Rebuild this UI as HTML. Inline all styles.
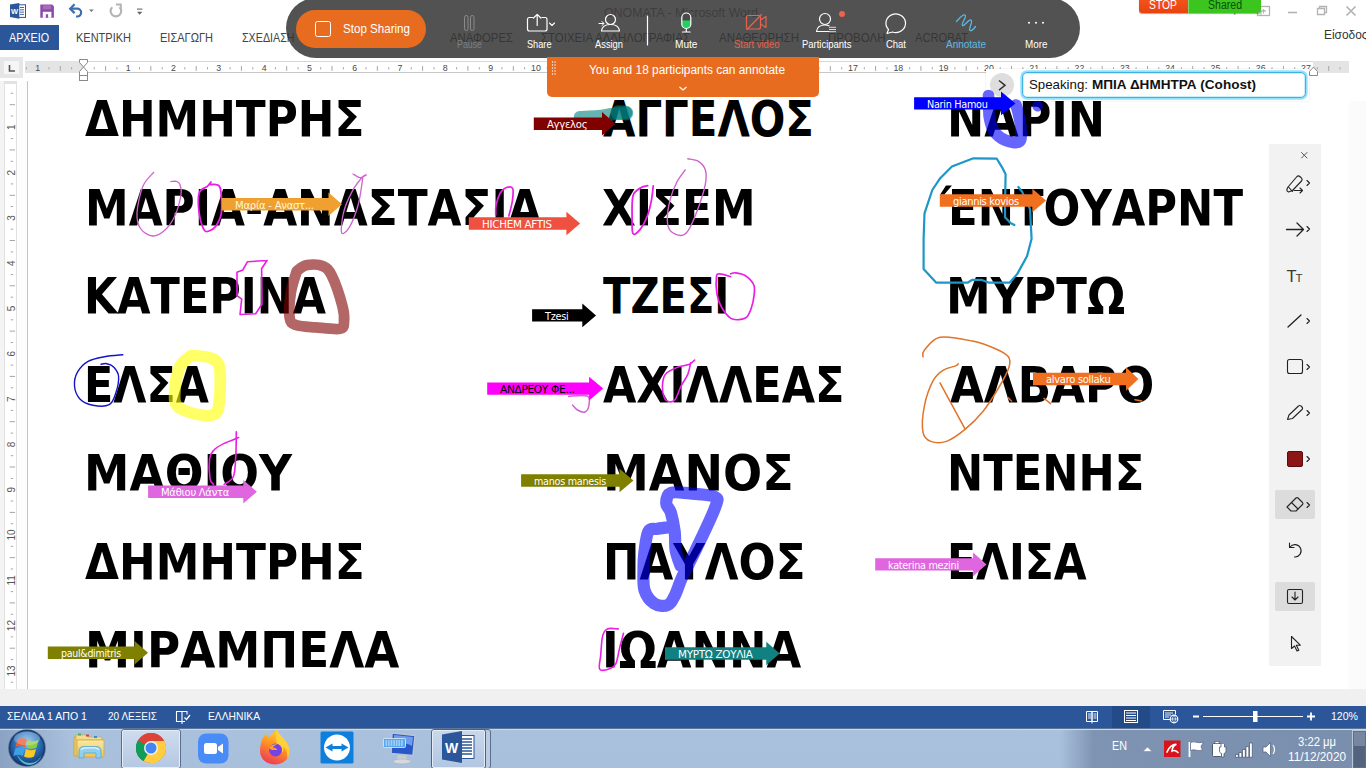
<!DOCTYPE html>
<html lang="el">
<head>
<meta charset="utf-8">
<title>ΟΝΟΜΑΤΑ - Microsoft Word</title>
<style>
*{box-sizing:border-box;margin:0;padding:0}
html,body{width:1366px;height:768px;overflow:hidden;background:#fff;font-family:"Liberation Sans",sans-serif;}
.abs{position:absolute}
#root{position:relative;width:1366px;height:768px;overflow:hidden;background:#fff}
.tab{position:absolute;top:26px;height:24px;line-height:24px;font-size:12.2px;color:#444;white-space:nowrap;transform-origin:0 50%}
.big{position:absolute;font-family:"DejaVu Sans Condensed","DejaVu Sans","Liberation Sans",sans-serif;font-stretch:condensed;font-weight:bold;font-size:49.24px;line-height:60px;height:60px;color:#000;white-space:nowrap;transform-origin:0 0;letter-spacing:0}
.zl{position:absolute;top:38px;height:12px;line-height:12px;font-size:11px;color:#fff;white-space:nowrap;text-align:center;transform:translateX(-50%)}
.st{position:absolute;top:706px;height:22px;line-height:21px;font-size:11px;color:#fff;white-space:nowrap}
.al{position:absolute;height:13px;line-height:13px;font-size:10.5px;color:#fff;white-space:nowrap;text-align:center;font-family:"DejaVu Sans","Liberation Sans",sans-serif;letter-spacing:-0.3px}
</style>
</head>
<body>
<div id="root">
<!-- ===== Word title bar / quick access ===== -->
<svg class="abs" style="left:0;top:0" width="300" height="25" viewBox="0 0 300 25">
  <!-- word icon -->
  <rect x="17" y="4.800" width="8.500" height="12.600" fill="#fff" stroke="#2b579a" stroke-width="1"/>
  <path d="M20 7.500h4M20 9.800h4M20 12.100h4M20 14.400h4" stroke="#2b579a" stroke-width=".9"/>
  <path d="M10 4.600 L19.300 2.900 V18.800 L10 17.100 Z" fill="#2b579a"/>
  <text x="14.600" y="13.800" font-size="7.500" font-weight="bold" fill="#fff" text-anchor="middle" font-family="Liberation Sans, sans-serif">W</text>
  <!-- save -->
  <path d="M40.300 4.500h11.800l1.800 1.800v11.500h-13.600z" fill="#8d4ba8"/>
  <rect x="42.800" y="5.300" width="8.400" height="4" fill="#a66cbd"/>
  <rect x="42.800" y="11.800" width="8.600" height="6" fill="#fff"/>
  <rect x="45.800" y="14.300" width="2.300" height="3.500" fill="#8d4ba8"/>
  <!-- undo -->
  <path d="M70.500 8.700 H77.200 a3.900 3.900 0 0 1 0 7.800 H76" fill="none" stroke="#3a6db5" stroke-width="2.200"/>
  <path d="M74.600 4.300 L70.200 8.700 L74.600 13.100" fill="none" stroke="#3a6db5" stroke-width="2.200"/>
  <path d="M89 9.400 h4.800 l-2.400 2.600z" fill="#777"/>
  <!-- redo -->
  <path d="M112.300 7.200 a5.300 5.300 0 1 0 7.200 0" fill="none" stroke="#b4b4b4" stroke-width="2.100"/>
  <path d="M116 4.600 h4.800 v4.600" fill="none" stroke="#b4b4b4" stroke-width="2"/>
  <!-- customize -->
  <path d="M137 9.100h5.400" stroke="#666" stroke-width="1.100"/>
  <path d="M137 11.700 h5.400 l-2.700 3z" fill="#666"/>
</svg>
<!-- window controls -->
<svg class="abs" style="left:1220px;top:0" width="146" height="25" viewBox="0 0 146 25">
  <g fill="none" stroke="#b3b3b3" stroke-width="1.300">
    <rect x="37.500" y="6.500" width="12" height="9"/>
    <path d="M41 15 v-4 h5 M43.500 13.500 v-4 m-2 2 l2-2 l2 2" stroke-width="1"/>
    <path d="M68 12.500h9" stroke-width="1.600"/>
    <path d="M97.500 8.500h7v6h-7z M99.500 8.500v-2h7v6h-2"/>
    <path d="M126.500 6.500l9 9m0-9l-9 9" stroke-width="1.700"/>
  </g>
  <rect x="14" y="13" width="1.500" height="2" fill="#b3b3b3"/>
</svg>

<!-- ribbon tabs -->
<div class="abs" style="left:0;top:25px;width:59px;height:25px;background:#2b579a"></div>
<div class="tab" style="left:8.5px;color:#fff;transform-origin:0 50%;transform:scaleX(0.8812)">ΑΡΧΕΙΟ</div>
<div class="tab" style="left:76px;transform-origin:0 50%;transform:scaleX(0.9023)">ΚΕΝΤΡΙΚΗ</div>
<div class="tab" style="left:160px;transform-origin:0 50%;transform:scaleX(0.9057)">ΕΙΣΑΓΩΓΗ</div>
<div class="tab" style="left:241.5px;transform-origin:0 50%;transform:scaleX(0.8780)">ΣΧΕΔΙΑΣΗ</div>
<div class="tab" style="left:449.5px;transform-origin:0 50%;transform:scaleX(0.9303)">ΑΝΑΦΟΡΕΣ</div>
<div class="tab" style="left:540.5px;transform-origin:0 50%;transform:scaleX(0.9401)">ΣΤΟΙΧΕΙΑ ΑΛΛΗΛΟΓΡΑΦΙΑΣ</div>
<div class="tab" style="left:719px;transform-origin:0 50%;transform:scaleX(0.9434)">ΑΝΑΘΕΩΡΗΣΗ</div>
<div class="tab" style="left:828px;transform-origin:0 50%;transform:scaleX(0.9465)">ΠΡΟΒΟΛΗ</div>
<div class="tab" style="left:915px;transform-origin:0 50%;transform:scaleX(0.9135)">ACROBAT</div>
<div class="tab" style="left:1323.500px;top:23px;font-size:12.500px;color:#333;transform-origin:0 50%;transform:scaleX(0.9515)">Είσοδος</div>
<div class="abs" style="left:604px;top:3.500px;height:18px;line-height:18px;font-size:13px;color:#777;white-space:nowrap;transform-origin:0 50%;transform:scaleX(0.9518)">ΟΝΟΜΑΤΑ - Microsoft Word</div>

<!-- ===== ruler ===== -->
<div class="abs" style="left:0;top:57px;width:23px;height:21px;background:#e6e6e6"></div>
<div class="abs" style="left:4px;top:61px;width:15px;height:13px;background:#f6f6f6"></div>
<svg class="abs" style="left:0;top:57px" width="23" height="21"><path d="M9.500 8v6h5.500" fill="none" stroke="#555" stroke-width="1.600"/></svg>
<div class="abs" style="left:25px;top:61px;width:1324px;height:12px;background:#e4e4e4"></div>
<div class="abs" style="left:83px;top:61px;width:1230px;height:12px;background:#fff;border-top:1px solid #d8d8d8;border-bottom:1px solid #c8c8c8"></div>
<svg class="abs" style="left:0;top:0" width="1366" height="90" font-family="Liberation Sans, sans-serif" font-size="8.800" fill="#4a4a4a">
<text x="37.6" y="70.800" text-anchor="middle">1</text>
<rect x="48.4" y="67.200" width="1" height="2.200" fill="#a6a6a6"/>
<rect x="59.8" y="66" width="1" height="4.800" fill="#a6a6a6"/>
<rect x="71.1" y="67.200" width="1" height="2.200" fill="#a6a6a6"/>
<rect x="93.7" y="67.200" width="1" height="2.200" fill="#a6a6a6"/>
<rect x="105.1" y="66" width="1" height="4.800" fill="#a6a6a6"/>
<rect x="116.4" y="67.200" width="1" height="2.200" fill="#a6a6a6"/>
<text x="128.2" y="70.800" text-anchor="middle">1</text>
<rect x="139.0" y="67.200" width="1" height="2.200" fill="#a6a6a6"/>
<rect x="150.3" y="66" width="1" height="4.800" fill="#a6a6a6"/>
<rect x="161.7" y="67.200" width="1" height="2.200" fill="#a6a6a6"/>
<text x="173.5" y="70.800" text-anchor="middle">2</text>
<rect x="184.3" y="67.200" width="1" height="2.200" fill="#a6a6a6"/>
<rect x="195.7" y="66" width="1" height="4.800" fill="#a6a6a6"/>
<rect x="207.0" y="67.200" width="1" height="2.200" fill="#a6a6a6"/>
<text x="218.8" y="70.800" text-anchor="middle">3</text>
<rect x="229.6" y="67.200" width="1" height="2.200" fill="#a6a6a6"/>
<rect x="240.9" y="66" width="1" height="4.800" fill="#a6a6a6"/>
<rect x="252.3" y="67.200" width="1" height="2.200" fill="#a6a6a6"/>
<text x="264.1" y="70.800" text-anchor="middle">4</text>
<rect x="274.9" y="67.200" width="1" height="2.200" fill="#a6a6a6"/>
<rect x="286.2" y="66" width="1" height="4.800" fill="#a6a6a6"/>
<rect x="297.6" y="67.200" width="1" height="2.200" fill="#a6a6a6"/>
<text x="309.4" y="70.800" text-anchor="middle">5</text>
<rect x="320.2" y="67.200" width="1" height="2.200" fill="#a6a6a6"/>
<rect x="331.5" y="66" width="1" height="4.800" fill="#a6a6a6"/>
<rect x="342.9" y="67.200" width="1" height="2.200" fill="#a6a6a6"/>
<text x="354.7" y="70.800" text-anchor="middle">6</text>
<rect x="365.5" y="67.200" width="1" height="2.200" fill="#a6a6a6"/>
<rect x="376.8" y="66" width="1" height="4.800" fill="#a6a6a6"/>
<rect x="388.2" y="67.200" width="1" height="2.200" fill="#a6a6a6"/>
<text x="400.0" y="70.800" text-anchor="middle">7</text>
<rect x="410.8" y="67.200" width="1" height="2.200" fill="#a6a6a6"/>
<rect x="422.1" y="66" width="1" height="4.800" fill="#a6a6a6"/>
<rect x="433.5" y="67.200" width="1" height="2.200" fill="#a6a6a6"/>
<text x="445.3" y="70.800" text-anchor="middle">8</text>
<rect x="456.1" y="67.200" width="1" height="2.200" fill="#a6a6a6"/>
<rect x="467.4" y="66" width="1" height="4.800" fill="#a6a6a6"/>
<rect x="478.8" y="67.200" width="1" height="2.200" fill="#a6a6a6"/>
<text x="490.6" y="70.800" text-anchor="middle">9</text>
<rect x="501.4" y="67.200" width="1" height="2.200" fill="#a6a6a6"/>
<rect x="512.8" y="66" width="1" height="4.800" fill="#a6a6a6"/>
<rect x="524.1" y="67.200" width="1" height="2.200" fill="#a6a6a6"/>
<text x="535.9" y="70.800" text-anchor="middle">10</text>
<rect x="546.7" y="67.200" width="1" height="2.200" fill="#a6a6a6"/>
<rect x="558.0" y="66" width="1" height="4.800" fill="#a6a6a6"/>
<rect x="569.4" y="67.200" width="1" height="2.200" fill="#a6a6a6"/>
<text x="581.2" y="70.800" text-anchor="middle">11</text>
<rect x="592.0" y="67.200" width="1" height="2.200" fill="#a6a6a6"/>
<rect x="603.3" y="66" width="1" height="4.800" fill="#a6a6a6"/>
<rect x="614.7" y="67.200" width="1" height="2.200" fill="#a6a6a6"/>
<text x="626.5" y="70.800" text-anchor="middle">12</text>
<rect x="637.3" y="67.200" width="1" height="2.200" fill="#a6a6a6"/>
<rect x="648.6" y="66" width="1" height="4.800" fill="#a6a6a6"/>
<rect x="660.0" y="67.200" width="1" height="2.200" fill="#a6a6a6"/>
<text x="671.8" y="70.800" text-anchor="middle">13</text>
<rect x="682.6" y="67.200" width="1" height="2.200" fill="#a6a6a6"/>
<rect x="693.9" y="66" width="1" height="4.800" fill="#a6a6a6"/>
<rect x="705.3" y="67.200" width="1" height="2.200" fill="#a6a6a6"/>
<text x="717.1" y="70.800" text-anchor="middle">14</text>
<rect x="727.9" y="67.200" width="1" height="2.200" fill="#a6a6a6"/>
<rect x="739.2" y="66" width="1" height="4.800" fill="#a6a6a6"/>
<rect x="750.6" y="67.200" width="1" height="2.200" fill="#a6a6a6"/>
<text x="762.4" y="70.800" text-anchor="middle">15</text>
<rect x="773.2" y="67.200" width="1" height="2.200" fill="#a6a6a6"/>
<rect x="784.5" y="66" width="1" height="4.800" fill="#a6a6a6"/>
<rect x="795.9" y="67.200" width="1" height="2.200" fill="#a6a6a6"/>
<text x="807.7" y="70.800" text-anchor="middle">16</text>
<rect x="818.5" y="67.200" width="1" height="2.200" fill="#a6a6a6"/>
<rect x="829.8" y="66" width="1" height="4.800" fill="#a6a6a6"/>
<rect x="841.2" y="67.200" width="1" height="2.200" fill="#a6a6a6"/>
<text x="853.0" y="70.800" text-anchor="middle">17</text>
<rect x="863.8" y="67.200" width="1" height="2.200" fill="#a6a6a6"/>
<rect x="875.1" y="66" width="1" height="4.800" fill="#a6a6a6"/>
<rect x="886.5" y="67.200" width="1" height="2.200" fill="#a6a6a6"/>
<text x="898.3" y="70.800" text-anchor="middle">18</text>
<rect x="909.1" y="67.200" width="1" height="2.200" fill="#a6a6a6"/>
<rect x="920.4" y="66" width="1" height="4.800" fill="#a6a6a6"/>
<rect x="931.8" y="67.200" width="1" height="2.200" fill="#a6a6a6"/>
<text x="943.6" y="70.800" text-anchor="middle">19</text>
<rect x="954.4" y="67.200" width="1" height="2.200" fill="#a6a6a6"/>
<rect x="965.7" y="66" width="1" height="4.800" fill="#a6a6a6"/>
<rect x="977.1" y="67.200" width="1" height="2.200" fill="#a6a6a6"/>
<text x="988.9" y="70.800" text-anchor="middle">20</text>
<rect x="999.7" y="67.200" width="1" height="2.200" fill="#a6a6a6"/>
<rect x="1011.0" y="66" width="1" height="4.800" fill="#a6a6a6"/>
<rect x="1022.4" y="67.200" width="1" height="2.200" fill="#a6a6a6"/>
<text x="1034.2" y="70.800" text-anchor="middle">21</text>
<rect x="1045.0" y="67.200" width="1" height="2.200" fill="#a6a6a6"/>
<rect x="1056.4" y="66" width="1" height="4.800" fill="#a6a6a6"/>
<rect x="1067.7" y="67.200" width="1" height="2.200" fill="#a6a6a6"/>
<text x="1079.5" y="70.800" text-anchor="middle">22</text>
<rect x="1090.3" y="67.200" width="1" height="2.200" fill="#a6a6a6"/>
<rect x="1101.7" y="66" width="1" height="4.800" fill="#a6a6a6"/>
<rect x="1113.0" y="67.200" width="1" height="2.200" fill="#a6a6a6"/>
<text x="1124.8" y="70.800" text-anchor="middle">23</text>
<rect x="1135.6" y="67.200" width="1" height="2.200" fill="#a6a6a6"/>
<rect x="1147.0" y="66" width="1" height="4.800" fill="#a6a6a6"/>
<rect x="1158.3" y="67.200" width="1" height="2.200" fill="#a6a6a6"/>
<text x="1170.1" y="70.800" text-anchor="middle">24</text>
<rect x="1180.9" y="67.200" width="1" height="2.200" fill="#a6a6a6"/>
<rect x="1192.2" y="66" width="1" height="4.800" fill="#a6a6a6"/>
<rect x="1203.6" y="67.200" width="1" height="2.200" fill="#a6a6a6"/>
<text x="1215.4" y="70.800" text-anchor="middle">25</text>
<rect x="1226.2" y="67.200" width="1" height="2.200" fill="#a6a6a6"/>
<rect x="1237.6" y="66" width="1" height="4.800" fill="#a6a6a6"/>
<rect x="1248.9" y="67.200" width="1" height="2.200" fill="#a6a6a6"/>
<text x="1260.7" y="70.800" text-anchor="middle">26</text>
<rect x="1271.5" y="67.200" width="1" height="2.200" fill="#a6a6a6"/>
<rect x="1282.9" y="66" width="1" height="4.800" fill="#a6a6a6"/>
<rect x="1294.2" y="67.200" width="1" height="2.200" fill="#a6a6a6"/>
<text x="1306.0" y="70.800" text-anchor="middle">27</text>
<rect x="1316.8" y="67.200" width="1" height="2.200" fill="#a6a6a6"/>
<rect x="1328.2" y="66" width="1" height="4.800" fill="#a6a6a6"/>
<rect x="1339.5" y="67.200" width="1" height="2.200" fill="#a6a6a6"/>
<rect x="25.8" y="67.200" width="1" height="2.200" fill="#a6a6a6"/>
  <!-- indent markers -->
  <path d="M79.500 59.500h8v3l-4 4.500l-4-4.500z" fill="#fff" stroke="#8a8a8a" stroke-width="1"/>
  <path d="M79.500 75.500v-4l4-4.500l4 4.500v4z" fill="#fff" stroke="#8a8a8a" stroke-width="1"/>
  <rect x="79.500" y="75.500" width="8" height="5" fill="#fff" stroke="#8a8a8a" stroke-width="1"/>
  <path d="M1309.500 75.500v-4l4-4.500l4 4.500v4z" fill="#fff" stroke="#8a8a8a" stroke-width="1"/>
</svg>

<!-- ===== left vertical ruler & page edge ===== -->
<div class="abs" style="left:0;top:81px;width:28px;height:608px;background:#fdfdfd"></div>
<div class="abs" style="left:0;top:81px;width:4px;height:608px;background:#f4f4f4"></div>
<div class="abs" style="left:4px;top:81px;width:13px;height:608px;background:#fff;border:1px solid #e1e1e1;border-bottom:none"></div>
<div class="abs" style="left:27px;top:81px;width:1px;height:608px;background:#c6c6c6"></div>
<div class="abs" style="left:5px;top:81px;width:11px;height:2.500px;background:#e2e2e2"></div>
<svg class="abs" style="left:0;top:0" width="30" height="690" font-family="Liberation Sans, sans-serif" font-size="10" fill="#555">
<rect x="10.700" y="92.8" width="2.400" height="1" fill="#a6a6a6"/>
<rect x="9.700" y="104.2" width="5.300" height="1" fill="#a6a6a6"/>
<rect x="10.700" y="115.5" width="2.400" height="1" fill="#a6a6a6"/>
<text transform="translate(15,127.3) rotate(-90)" text-anchor="middle">1</text>
<rect x="10.700" y="138.1" width="2.400" height="1" fill="#a6a6a6"/>
<rect x="9.700" y="149.4" width="5.300" height="1" fill="#a6a6a6"/>
<rect x="10.700" y="160.8" width="2.400" height="1" fill="#a6a6a6"/>
<text transform="translate(15,172.6) rotate(-90)" text-anchor="middle">2</text>
<rect x="10.700" y="183.4" width="2.400" height="1" fill="#a6a6a6"/>
<rect x="9.700" y="194.8" width="5.300" height="1" fill="#a6a6a6"/>
<rect x="10.700" y="206.1" width="2.400" height="1" fill="#a6a6a6"/>
<text transform="translate(15,217.9) rotate(-90)" text-anchor="middle">3</text>
<rect x="10.700" y="228.7" width="2.400" height="1" fill="#a6a6a6"/>
<rect x="9.700" y="240.0" width="5.300" height="1" fill="#a6a6a6"/>
<rect x="10.700" y="251.4" width="2.400" height="1" fill="#a6a6a6"/>
<text transform="translate(15,263.2) rotate(-90)" text-anchor="middle">4</text>
<rect x="10.700" y="274.0" width="2.400" height="1" fill="#a6a6a6"/>
<rect x="9.700" y="285.3" width="5.300" height="1" fill="#a6a6a6"/>
<rect x="10.700" y="296.7" width="2.400" height="1" fill="#a6a6a6"/>
<text transform="translate(15,308.5) rotate(-90)" text-anchor="middle">5</text>
<rect x="10.700" y="319.3" width="2.400" height="1" fill="#a6a6a6"/>
<rect x="9.700" y="330.6" width="5.300" height="1" fill="#a6a6a6"/>
<rect x="10.700" y="342.0" width="2.400" height="1" fill="#a6a6a6"/>
<text transform="translate(15,353.8) rotate(-90)" text-anchor="middle">6</text>
<rect x="10.700" y="364.6" width="2.400" height="1" fill="#a6a6a6"/>
<rect x="9.700" y="375.9" width="5.300" height="1" fill="#a6a6a6"/>
<rect x="10.700" y="387.3" width="2.400" height="1" fill="#a6a6a6"/>
<text transform="translate(15,399.1) rotate(-90)" text-anchor="middle">7</text>
<rect x="10.700" y="409.9" width="2.400" height="1" fill="#a6a6a6"/>
<rect x="9.700" y="421.2" width="5.300" height="1" fill="#a6a6a6"/>
<rect x="10.700" y="432.6" width="2.400" height="1" fill="#a6a6a6"/>
<text transform="translate(15,444.4) rotate(-90)" text-anchor="middle">8</text>
<rect x="10.700" y="455.2" width="2.400" height="1" fill="#a6a6a6"/>
<rect x="9.700" y="466.5" width="5.300" height="1" fill="#a6a6a6"/>
<rect x="10.700" y="477.9" width="2.400" height="1" fill="#a6a6a6"/>
<text transform="translate(15,489.7) rotate(-90)" text-anchor="middle">9</text>
<rect x="10.700" y="500.5" width="2.400" height="1" fill="#a6a6a6"/>
<rect x="9.700" y="511.9" width="5.300" height="1" fill="#a6a6a6"/>
<rect x="10.700" y="523.2" width="2.400" height="1" fill="#a6a6a6"/>
<text transform="translate(15,535.0) rotate(-90)" text-anchor="middle">10</text>
<rect x="10.700" y="545.8" width="2.400" height="1" fill="#a6a6a6"/>
<rect x="9.700" y="557.1" width="5.300" height="1" fill="#a6a6a6"/>
<rect x="10.700" y="568.5" width="2.400" height="1" fill="#a6a6a6"/>
<text transform="translate(15,580.3) rotate(-90)" text-anchor="middle">11</text>
<rect x="10.700" y="591.1" width="2.400" height="1" fill="#a6a6a6"/>
<rect x="9.700" y="602.4" width="5.300" height="1" fill="#a6a6a6"/>
<rect x="10.700" y="613.8" width="2.400" height="1" fill="#a6a6a6"/>
<text transform="translate(15,625.6) rotate(-90)" text-anchor="middle">12</text>
<rect x="10.700" y="636.4" width="2.400" height="1" fill="#a6a6a6"/>
<rect x="9.700" y="647.7" width="5.300" height="1" fill="#a6a6a6"/>
<rect x="10.700" y="659.1" width="2.400" height="1" fill="#a6a6a6"/>
<text transform="translate(15,670.9) rotate(-90)" text-anchor="middle">13</text>
<rect x="10.700" y="681.7" width="2.400" height="1" fill="#a6a6a6"/>
</svg>
<!-- right scroll area -->
<div class="abs" style="left:1349px;top:101px;width:17px;height:588px;background:#fbfbfb"></div>
<!-- bottom gray -->
<div class="abs" style="left:0;top:689px;width:1366px;height:17px;background:#f0f0f0"></div>
<!-- ===== status bar ===== -->
<div class="abs" style="left:0;top:706px;width:1366px;height:22px;background:#2b579a"></div>
<div class="st" style="left:7px;transform-origin:0 50%;transform:scaleX(0.9608)">ΣΕΛΙΔΑ 1 ΑΠΟ 1</div>
<div class="st" style="left:108px;transform-origin:0 50%;transform:scaleX(0.9122)">20 ΛΕΞΕΙΣ</div>
<svg class="abs" style="left:174px;top:708px" width="20" height="18" viewBox="0 0 20 18">
  <path d="M2.500 3.500h5.500v10h-5.500z M8 3.500 h5 v3 M8 13.500h3" fill="none" stroke="#fff" stroke-width="1.100"/>
  <path d="M8 13.500v2.500" stroke="#fff" stroke-width="1.100"/>
  <path d="M10.500 9.500l2 2l3.500-4.500" fill="none" stroke="#fff" stroke-width="1.300"/>
</svg>
<div class="st" style="left:208px;transform-origin:0 50%;transform:scaleX(0.9343)">ΕΛΛΗΝΙΚΑ</div>
<div class="abs" style="left:1112px;top:706px;width:38px;height:22px;background:#224b88"></div>
<svg class="abs" style="left:1080px;top:706px" width="286" height="22" viewBox="0 0 286 22">
  <g fill="none" stroke="#fff" stroke-width="1">
    <!-- read mode -->
    <path d="M6.500 5.500h5.500v10h-5.500z M12 5.500h5.500v10h-5.500z"/>
    <path d="M8 8h3M8 10h3M8 12h3M13.500 8h3M13.500 10h3M13.500 12h3" stroke-width="0.900"/>
    <path d="M12 15.500v2"/>
    <!-- print layout -->
    <rect x="44.500" y="4.500" width="13" height="12"/>
    <path d="M46 7h10M46 9.500h10M46 12h10M46 14.500h10" stroke-width="1"/>
    <!-- web layout -->
    <path d="M95.500 13.500h-12v-9h12v4"/>
    <path d="M85 7h8M85 9h6M85 11h4" stroke-width="0.900"/>
  </g>
  <circle cx="94" cy="13" r="3.800" fill="#2b579a" stroke="#fff" stroke-width="1.200"/>
  <path d="M90.500 13h7M94 9.500c-2 2-2 5 0 7c2-2 2-5 0-7" fill="none" stroke="#fff" stroke-width="0.700"/>
  <!-- zoom slider -->
  <rect x="113" y="9.500" width="6" height="2" fill="#fff"/>
  <rect x="123" y="10" width="100" height="1" fill="#fff"/>
  <rect x="173" y="5" width="4.500" height="11" fill="#fff"/>
  <path d="M227 10.500h8M231 6.500v8" stroke="#fff" stroke-width="1.800"/>
</svg>
<div class="st" style="left:1331px;transform-origin:0 50%;transform:scaleX(0.9595)">120%</div>

<!-- ===== Windows taskbar ===== -->
<div class="abs" style="left:0;top:728px;width:1366px;height:40px;background:linear-gradient(#b3c9e2 0,#a9c1dc 8%,#a8c0dc 100%)"></div>
<div class="abs" style="left:0;top:728px;width:1366px;height:1px;background:#5d7596"></div>
<div class="abs" style="left:0;top:729px;width:1366px;height:1px;background:#c9d8ea"></div>
<div class="abs" style="left:1060px;top:730px;width:306px;height:38px;background:linear-gradient(90deg,rgba(110,130,162,0) 0,rgba(110,130,162,.72) 11%,rgba(110,130,162,.8) 100%)"></div>
<div class="abs" style="left:0;top:730px;width:70px;height:38px;background:linear-gradient(90deg,rgba(125,150,185,.7) 0,rgba(125,150,185,0) 100%)"></div>
<!-- active buttons -->
<div class="abs" style="left:121px;top:729px;width:60px;height:40px;border:1px solid #5b6f8c;border-radius:3px;background:linear-gradient(#cfdcee,#b4c8e2)"></div>
<div class="abs" style="left:122px;top:730px;width:58px;height:38px;border:1px solid #e3ecf7;border-radius:2px"></div>
<div class="abs" style="left:436px;top:729px;width:55px;height:40px;border:1px solid #5b6f8c;border-radius:3px;background:#b9cce4"></div>
<div class="abs" style="left:431px;top:729px;width:55px;height:40px;border:1px solid #4f627f;border-radius:3px;background:linear-gradient(#c9d8ec,#b2c6e1)"></div>
<div class="abs" style="left:432px;top:730px;width:53px;height:38px;border:1px solid #e3ecf7;border-radius:2px"></div>
<svg class="abs" style="left:0;top:728px" width="500" height="40" viewBox="0 0 500 40">
  <defs>
    <radialGradient id="orb" cx="50%" cy="35%" r="65%"><stop offset="0" stop-color="#7fc0ee"/><stop offset=".55" stop-color="#2a6fb8"/><stop offset="1" stop-color="#123a72"/></radialGradient>
    <linearGradient id="fold" x1="0" y1="0" x2="0" y2="1"><stop offset="0" stop-color="#fbe9a0"/><stop offset="1" stop-color="#e9c45c"/></linearGradient>
    <linearGradient id="ffx" x1=".7" y1="0" x2=".3" y2="1"><stop offset="0" stop-color="#ffd83a"/><stop offset=".45" stop-color="#ff9a1f"/><stop offset="1" stop-color="#f0355a"/></linearGradient>
  </defs>
  <!-- start orb -->
  <circle cx="27" cy="20" r="18.800" fill="#1c3a66" opacity=".6"/>
  <circle cx="27" cy="20" r="17.300" fill="url(#orb)" stroke="#17376a" stroke-width="1.200"/>
  <path d="M17 26c3 6 8 9 13 9c5 0 9-3 12-8c-3 7-8 10-13 10c-5 0-10-4-12-11z" fill="#6fe0f5" opacity=".75"/>
  <path d="M17.500 11.500c3.500-1.800 6.500-1.800 9.500 0l-2 7.500c-3-1.800-6-1.800-9.500 0z" fill="#f0592b"/>
  <path d="M28.500 12c3.500 1.800 6.500 1.800 10 0l-2 7.500c-3.500 1.800-6.500 1.800-10 0z" fill="#8fcf3c"/>
  <path d="M15.300 20.500c3.500-1.800 6.500-1.800 9.500 0l-2 7.500c-3-1.800-6-1.800-9.500 0z" fill="#3fa0e8"/>
  <path d="M26 21c3.500 1.800 6.500 1.800 10 0l-2 7.500c-3.500 1.800-6.500 1.800-10 0z" fill="#fbc926"/>
  <ellipse cx="27" cy="10.500" rx="13" ry="7" fill="#fff" opacity=".25"/>
  <!-- explorer -->
  <path d="M74 9h10l2 2h16v17h-28z" fill="#e6c766" stroke="#c9a43e" stroke-width=".8"/>
  <path d="M76 7h10l2 2h14v3h-26z" fill="#f3dc8a" stroke="#c9a43e" stroke-width=".6"/>
  <rect x="77" y="12" width="27" height="17" rx="1" fill="url(#fold)" stroke="#cfa94a" stroke-width=".8"/>
  <rect x="78" y="5.500" width="3" height="2" fill="#4caf50"/><rect x="86" y="6.500" width="3" height="2" fill="#d9442e"/><rect x="94" y="8" width="3" height="2" fill="#3a8fd8"/>
  <path d="M79 30v-7c0-3 2-4.500 5-4.500h12c3 0 5 1.500 5 4.500v7h-5v-5h-12v5z" fill="#8fd0ee" stroke="#5aa6cf" stroke-width=".8"/>
  <path d="M81 22c1-1.800 2-2.200 4-2.200h10c2 0 3 .4 4 2.200" fill="none" stroke="#e6f6ff" stroke-width="1.200"/>
  <!-- chrome -->
  <circle cx="151" cy="20" r="15" fill="#db4437"/>
  <path d="M151 20L138 12.500A15 15 0 0 0 143.500 33z" fill="#0f9d58"/>
  <path d="M151 20L143.500 33A15 15 0 0 0 164 12.500z" fill="#ffcd40"/>
  <path d="M151 20L164 12.500A15 15 0 0 0 138 12.500z" fill="#db4437"/>
  <path d="M151 20l-7.500 13A15 15 0 0 1 138 12.500z" fill="#0f9d58"/>
  <path d="M151 13h13a15 15 0 0 1-13.500 22l6.500-11z" fill="#ffcd40"/>
  <circle cx="151" cy="20" r="7" fill="#f1f1f1"/>
  <circle cx="151" cy="20" r="5.500" fill="#4285f4"/>
  <!-- zoom -->
  <rect x="198" y="5.500" width="30.500" height="30" rx="8" fill="#4a8cf7"/>
  <rect x="204" y="15" width="13" height="11" rx="2.500" fill="#fff"/>
  <path d="M218 19l5-3.500v10l-5-3.500z" fill="#fff"/>
  <!-- firefox -->
  <path d="M262 12c1-3 3-5 5-6c0 1.500 .5 2.500 2 3.500c2.500-3.500 5.500-5 8-8.500c.5 3.500 3 5.500 6 9c4 4.500 6.500 8 6.500 13c0 8-6.500 13.500-14.500 13.500s-15-5.500-15-13.500c0-4 1-7.500 2-11z" fill="url(#ffx)"/>
  <path d="M277 1c.5 3.500 3 5.500 6 9c4 4.500 6.500 8 6.500 13c0 3-1 5.500-2.500 7.500c1-5-.5-9-3.500-12c.5 2.500 0 4.500-1.500 6c-1-4.500-4-7-8-7c2-1.500 3-3.500 2.500-6c-1-3 0-7 .5-10.500z" fill="#ffd43a" opacity=".9"/>
  <circle cx="275.500" cy="22" r="6.500" fill="#7542e5"/>
  <path d="M269 20c1.500-3 5-4.500 8.500-3.500c-2.500 .5-4 1.500-4.500 3c2 0 3.500 .8 4.500 2.500c-3.500-.5-6.500 1-8.500-2z" fill="#ff9a2e"/>
  <!-- teamviewer -->
  <rect x="320.500" y="3.500" width="33" height="32" rx="1.500" fill="#0e7fdc"/>
  <circle cx="337" cy="19.500" r="13" fill="#fff"/>
  <path d="M325.500 19.500l7-4v2.500h9v-2.500l7 4l-7 4v-2.500h-9v2.500z" fill="#0e7fdc"/>
  <!-- on-screen keyboard / monitor -->
  <path d="M392 5l23 2.500l-2 20l-22-2z" fill="#2a57c8" stroke="#b9c4d4" stroke-width="1.600"/>
  <path d="M394 7l19 2l-1 9c-6-4-12-3-18-1z" fill="#7fb0f2" opacity=".8"/>
  <path d="M398 27l8 .8l1 4h-10z" fill="#c9ced6"/>
  <ellipse cx="402" cy="33.500" rx="9" ry="2.500" fill="#d5d9df" stroke="#a8aeb8" stroke-width=".6"/>
  <rect x="383.500" y="10.500" width="22" height="9" rx="1" fill="#5aa6ee" stroke="#dfeeff" stroke-width=".8"/>
  <path d="M385.500 13h18M385.500 15h18M385.500 17h18" stroke="#e9f4ff" stroke-width="1" stroke-dasharray="1.600 1"/>
  <!-- word -->
  <rect x="456" y="7.500" width="18" height="23" fill="#fff" stroke="#2b579a" stroke-width="1"/>
  <path d="M462 11h10M462 14h10M462 17h10M462 20h10M462 23h10M462 26h10" stroke="#2b579a" stroke-width="1.300"/>
  <path d="M442 6.500l20-3.500v32l-20-3.500z" fill="#2b579a"/>
  <text x="451.500" y="24.500" font-size="14" font-weight="bold" fill="#fff" text-anchor="middle" font-family="Liberation Sans, sans-serif">W</text>
</svg>
<!-- tray -->
<div class="abs" style="left:1112px;top:739px;height:14px;line-height:14px;font-size:12px;color:#fff;transform-origin:0 50%;transform:scaleX(0.8997)">EN</div>
<svg class="abs" style="left:1136px;top:730px" width="230" height="38" viewBox="0 0 230 38">
  <path d="M7 21.500l4.500-4.500l4.500 4.500z" fill="#fff" stroke="#6a7f9e" stroke-width=".5"/>
  <!-- avira -->
  <rect x="28" y="10.500" width="16.500" height="16.500" fill="#d8131b"/>
  <path d="M31 22c2-5 6-8 9.500-7.500c-2 0-4.500 3-4.500 6.500c2-1 4-.500 6 1.500" fill="none" stroke="#fff" stroke-width="1.700" stroke-linecap="round"/>
  <!-- flag -->
  <path d="M53.500 12v15" stroke="#fff" stroke-width="1.800"/>
  <path d="M54.500 12.500c4-2 7 1.500 13-.5l-2.500 4.500l1.500 3.500c-5 2-8-1.500-12 .5z" fill="#fff" stroke="#50627f" stroke-width=".7"/>
  <!-- power -->
  <rect x="76.500" y="13.500" width="9" height="13" rx="1" fill="#fff" stroke="#4a5b75" stroke-width="1"/>
  <rect x="79" y="11.500" width="4" height="2" fill="#fff" stroke="#4a5b75" stroke-width=".6"/>
  <path d="M85 14v3h-1.500v4c0 1.500 1 2 2 2.500v3.500h2.500v-3.500c1-.5 2-1 2-2.500v-4h-1.500v-3" fill="#fff" stroke="#4a5b75" stroke-width=".8"/>
  <!-- signal -->
  <path d="M99.500 24.500h2.800v2.800h-2.800zM103 22.500h2.800v4.800h-2.800zM106.500 19.500h2.800v7.800h-2.800zM110 16.500h2.800v10.800h-2.800zM113.500 13h2.800v14.300h-2.800z" fill="#fff" stroke="#44546e" stroke-width=".7"/>
  <!-- volume -->
  <path d="M127 17h3l4.500-4.500v14l-4.500-4.500h-3z" fill="#fff" stroke="#4a5b75" stroke-width=".7"/>
  <path d="M137 15c2 2.500 2 6.500 0 9" fill="none" stroke="#fff" stroke-width="1.200"/>
  <!-- show desktop -->
  <rect x="216.500" y="0.500" width="14" height="38" fill="#5f6f88" stroke="#b9c6d8" stroke-width="1"/>
  <rect x="218" y="2" width="11" height="14" fill="#8a9bb5" opacity=".55"/>
  <rect x="218" y="16" width="11" height="21" fill="#485873" opacity=".5"/>
</svg>
<div class="abs" style="left:1298px;top:735px;height:14px;line-height:14px;font-size:12px;color:#fff;transform-origin:0 50%;transform:scaleX(0.9375)">3:22 μμ</div>
<div class="abs" style="left:1288px;top:750px;height:14px;line-height:14px;font-size:12px;color:#fff;transform-origin:0 50%;transform:scaleX(0.9802)">11/12/2020</div>
<!-- ===== document text ===== -->
<div class="big" style="left:85.44px;top:89.05px;transform:scaleX(0.9891)">ΔΗΜΗΤΡΗΣ</div>
<div class="big" style="left:84.96px;top:177.55px;transform:scaleX(0.9900)">ΜΑΡΙΑ-ΑΝΑΣΤΑΣΙΑ</div>
<div class="big" style="left:84.24px;top:266.05px;transform:scaleX(0.9702)">ΚΑΤΕΡΙΝΑ</div>
<div class="big" style="left:84.32px;top:354.55px;transform:scaleX(0.9664)">ΕΛΣΑ</div>
<div class="big" style="left:84.19px;top:443.05px;transform:scaleX(1.0293)">ΜΑΘΙΟΥ</div>
<div class="big" style="left:85.43px;top:531.55px;transform:scaleX(0.9899)">ΔΗΜΗΤΡΗΣ</div>
<div class="big" style="left:84.82px;top:620.05px;transform:scaleX(1.0228)">ΜΙΡΑΜΠΕΛΑ</div>
<div class="big" style="left:602.88px;top:89.05px;transform:scaleX(0.9453)">ΑΓΓΕΛΟΣ</div>
<div class="big" style="left:602.27px;top:177.55px;transform:scaleX(0.9891)">ΧΙΣΕΜ</div>
<div class="big" style="left:602.87px;top:266.05px;transform:scaleX(0.9060)">ΤΖΕΣΙ</div>
<div class="big" style="left:602.85px;top:354.55px;transform:scaleX(0.9723)">ΑΧΙΛΛΕΑΣ</div>
<div class="big" style="left:602.56px;top:443.05px;transform:scaleX(1.0397)">ΜΑΝΟΣ</div>
<div class="big" style="left:602.54px;top:531.55px;transform:scaleX(0.9846)">ΠΑΥΛΟΣ</div>
<div class="big" style="left:602.48px;top:620.05px;transform:scaleX(1.0127)">ΙΩΑΝΝΑ</div>
<div class="big" style="left:946.62px;top:89.05px;transform:scaleX(1.0048)">ΝΑΡΙΝ</div>
<div class="big" style="left:941.02px;top:177.55px;transform:scaleX(0.9789)">ΈΝΤΟΥΑΡΝΤ</div>
<div class="big" style="left:946.46px;top:266.05px;transform:scaleX(1.0150)">ΜΥΡΤΩ</div>
<div class="big" style="left:949.84px;top:354.55px;transform:scaleX(0.9878)">ΑΛΒΑΡΟ</div>
<div class="big" style="left:946.67px;top:443.05px;transform:scaleX(0.9768)">ΝΤΕΝΗΣ</div>
<div class="big" style="left:946.95px;top:531.55px;transform:scaleX(0.9589)">ΕΛΙΣΑ</div>
<!-- ===== Zoom floating meeting toolbar ===== -->
<div class="abs" style="left:286px;top:-2px;width:794px;height:59.500px;border-radius:30px;background:rgba(52,52,52,.85)"></div>
<div class="abs" style="left:296px;top:10px;width:130px;height:38px;border-radius:19px;background:#e86c1f"></div>
<div class="abs" style="left:315px;top:21px;width:16px;height:16px;border:1.300px solid #fff;border-radius:2.500px"></div>
<div class="abs" style="left:343px;top:20.800px;height:16px;line-height:16px;font-size:13px;color:#fff;white-space:nowrap;transform-origin:0 50%;transform:scaleX(0.8913)">Stop Sharing</div>
<svg class="abs" style="left:286px;top:0" width="800" height="58" viewBox="286 0 800 58" fill="none" stroke-linecap="round" stroke-linejoin="round">
  <!-- pause -->
  <rect x="464.500" y="15.500" width="3.500" height="15" rx="1.700" stroke="#8a8a8a" stroke-width="1"/>
  <rect x="470.500" y="15.500" width="3.500" height="15" rx="1.700" stroke="#8a8a8a" stroke-width="1"/>
  <!-- share -->
  <path d="M532.500 17.500h-3a2 2 0 0 0-2 2v9.500a2 2 0 0 0 2 2h15.500a2 2 0 0 0 2-2v-9.500a2 2 0 0 0-2-2h-3" stroke="#fff" stroke-width="1.200"/>
  <path d="M537.200 25.500v-11M533.500 18l3.700-3.700l3.700 3.700" stroke="#fff" stroke-width="1.200"/>
  <path d="M549.500 23l2.500 2.500l2.500-2.500" stroke="#fff" stroke-width="1.100"/>
  <!-- assign -->
  <circle cx="610.500" cy="19.500" r="5" stroke="#fff" stroke-width="1.200"/>
  <path d="M601.500 31c.5-4.500 4-6.500 9-6.500s8.500 2 9 6.500z" stroke="#fff" stroke-width="1.200"/>
  <path d="M599 23.500h4.500M602 21.500l2 2l-2 2" stroke="#fff" stroke-width="1"/>
  <!-- separator -->
  <path d="M647.500 16v29" stroke="#fff" stroke-width="1.200"/>
  <!-- mic -->
  <rect x="681.800" y="13" width="9" height="15.500" rx="4.500" fill="#23d160" stroke="none"/>
  <path d="M681.800 20.500v-3a4.500 4.500 0 0 1 9 0v3z" fill="#4a4a4a" stroke="none"/>
  <rect x="681.800" y="13" width="9" height="15.500" rx="4.500" stroke="#fff" stroke-width="1.200"/>
  <path d="M686.300 28.500v3M682.500 32h7.600" stroke="#fff" stroke-width="1.200"/>
  <!-- video off -->
  <rect x="746.500" y="15.500" width="14" height="13.500" rx="2" stroke="#e8624d" stroke-width="1.200"/>
  <path d="M760.500 20l5.500-3.500v11l-5.500-3.500" stroke="#e8624d" stroke-width="1.200"/>
  <path d="M747 29.500l14.500-15" stroke="#e8624d" stroke-width="1.200"/>
  <!-- participants -->
  <circle cx="825" cy="19" r="5.500" stroke="#fff" stroke-width="1.200"/>
  <path d="M829 31.500h-12.500c.5-4.500 3.500-6.500 8.500-6.500c1.500 0 3 .3 4 .8" stroke="#fff" stroke-width="1.200"/>
  <path d="M829 27.300h7M829 29.500h7M829 31.700h7" stroke="#fff" stroke-width=".8" stroke-linecap="butt"/>
  <circle cx="842" cy="14" r="3" fill="#f1614f" stroke="none"/>
  <!-- chat -->
  <path d="M888.500 29.500a9.800 9.300 0 1 1 4 2.500l-5.500 1.500z" stroke="#fff" stroke-width="1.200"/>
  <!-- annotate -->
  <path d="M956.500 21.500c3-3 6-7.500 8.500-6.500c2.500 1.500-4.500 9-2.500 10.500c2 1 6-6.500 8.500-5.500c2.500 1.500-3 9-1 10.500c1.500 .8 4-2 5.500-4" stroke="#5cb9e2" stroke-width="1.300"/>
  <!-- more -->
  <circle cx="1029" cy="22.700" r="1" fill="#fff" stroke="none"/><circle cx="1036" cy="22.700" r="1" fill="#fff" stroke="none"/><circle cx="1043" cy="22.700" r="1" fill="#fff" stroke="none"/>
</svg>
<div class="zl" style="left:469.500px;color:#7a7f88;transform:none;left:457px;transform-origin:0 50%;transform:scaleX(0.8012)">Pause</div>
<div class="zl" style="transform:none;left:527px;transform-origin:0 50%;transform:scaleX(0.8345)">Share</div>
<div class="zl" style="transform:none;left:595px;transform-origin:0 50%;transform:scaleX(0.8477)">Assign</div>
<div class="zl" style="transform:none;left:674.500px;transform-origin:0 50%;transform:scaleX(0.9195)">Mute</div>
<div class="zl" style="transform:none;left:733.500px;color:#e8624d;transform-origin:0 50%;transform:scaleX(0.8651)">Start video</div>
<div class="zl" style="transform:none;left:801.500px;transform-origin:0 50%;transform:scaleX(0.8611)">Participants</div>
<div class="zl" style="transform:none;left:886px;transform-origin:0 50%;transform:scaleX(0.8602)">Chat</div>
<div class="zl" style="transform:none;left:946px;color:#5cb9e2;transform-origin:0 50%;transform:scaleX(0.9081)">Annotate</div>
<div class="zl" style="transform:none;left:1024.500px;transform-origin:0 50%;transform:scaleX(0.8978)">More</div>

<!-- STOP / Shared -->
<div class="abs" style="left:1139px;top:-3px;width:122px;height:16px;border-radius:3px;overflow:hidden;box-shadow:0 1px 1px rgba(0,0,0,.35)">
  <div class="abs" style="left:0;top:0;width:49px;height:16px;background:linear-gradient(#f3561d,#e8430f)"></div>
  <div class="abs" style="left:49px;top:0;width:73px;height:16px;background:#3cc41f;border-left:1px solid #7bd86a"></div>
</div>
<div class="abs" style="left:1149px;top:-1px;height:13px;line-height:13px;font-size:12px;color:#fff;white-space:nowrap;transform-origin:0 50%;transform:scaleX(0.8624)">STOP</div>
<div class="abs" style="left:1207.500px;top:-1px;height:13px;line-height:13px;font-size:12px;color:#0b4f0b;white-space:nowrap;transform-origin:0 50%;transform:scaleX(0.8785)">Shared</div>

<!-- annotate banner -->
<div class="abs" style="left:547px;top:57px;width:272px;height:40px;background:#e86c1f;border-radius:0 0 5px 5px"></div>
<svg class="abs" style="left:547px;top:57px" width="272" height="40" viewBox="0 0 272 40">
  <g fill="#fff"><circle cx="5.500" cy="5" r=".7"/><circle cx="8" cy="5" r=".7"/><circle cx="5.500" cy="8" r=".7"/><circle cx="8" cy="8" r=".7"/><circle cx="5.500" cy="11" r=".7"/><circle cx="8" cy="11" r=".7"/><circle cx="5.500" cy="14" r=".7"/><circle cx="8" cy="14" r=".7"/><circle cx="5.500" cy="17" r=".7"/><circle cx="8" cy="17" r=".7"/></g>
  <path d="M132.500 30l3.500 3l3.500-3" fill="none" stroke="#fff" stroke-width="1.200"/>
</svg>
<div class="abs" style="left:589px;top:62px;height:16px;line-height:16px;font-size:12.500px;color:#fff;white-space:nowrap;transform-origin:0 50%;transform:scaleX(0.9517)">You and 18 participants can annotate</div>

<!-- speaking box -->
<div class="abs" style="left:986px;top:68.800px;width:323px;height:32.500px;background:#fff;box-shadow:0 0 1px rgba(0,0,0,.22)"></div>
<div class="abs" style="left:990px;top:73px;width:24px;height:24px;border-radius:50%;background:#dedede"></div>
<svg class="abs" style="left:990px;top:73px" width="24" height="24"><path d="M9 7.500l6 4.800l-6 4.800" fill="none" stroke="#333" stroke-width="1.500"/></svg>
<div class="abs" style="left:1021.500px;top:71.700px;width:284px;height:26.400px;border:1.500px solid #41b2de;border-radius:5px;background:#fff;box-shadow:0 0 0 1.700px #93e2fa,inset 0 0 0 1px #c9effc"></div>
<div class="abs" style="left:1029px;top:77px;height:16px;line-height:16px;font-size:13px;color:#111;white-space:nowrap;transform-origin:0 50%;transform:scaleX(1.0203)">Speaking:</div>
<div class="abs" style="left:1092px;top:77px;height:16px;line-height:16px;font-size:13px;font-weight:bold;color:#111;white-space:nowrap;transform-origin:0 50%;transform:scaleX(1.0421)">ΜΠΙΑ ΔΗΜΗΤΡΑ (Cohost)</div>

<!-- annotation side toolbar -->
<div class="abs" style="left:1269px;top:144px;width:52px;height:522px;background:#f2f2f2"></div>
<div class="abs" style="left:1275px;top:490px;width:40px;height:29px;background:#dcdcdc;border-radius:2px"></div>
<div class="abs" style="left:1275px;top:582px;width:40px;height:29px;background:#dcdcdc;border-radius:2px"></div>
<div class="abs" style="left:1287px;top:451px;width:16px;height:16px;background:#8c1515;border:1px solid #5a0d0d;border-radius:2px"></div>
<svg class="abs" style="left:1269px;top:144px" width="52" height="522" viewBox="1269 144 52 522" fill="none" stroke="#222" stroke-width="1.100" stroke-linecap="round" stroke-linejoin="round">
  <path d="M1301.500 152.500l5.500 5.500m0-5.500l-5.500 5.500" stroke="#555" stroke-width="1"/>
  <!-- pen with arrow -->
  <path d="M1288 187l9-10.500a2 2 0 0 1 2.800 0l1.700 1.700a2 2 0 0 1 0 2.800l-9 9.500l-4 1.500a2.500 2.500 0 0 1-1.500-3z"/>
  <path d="M1288.500 187l4 4.500"/>
  <path d="M1294 190.500h8.500m-2.500-2.500l2.500 2.500l-2.500 2.500"/>
  <path d="M1307 180.500l2.500 2.500l-2.500 2.500"/>
  <!-- arrow -->
  <path d="M1286.500 229.500h17m-6.500-6.500l6.500 6.500l-6.500 6.500" stroke-width="1.300"/>
  <path d="M1307 226.500l2.500 2.500l-2.500 2.500"/>
  <!-- Tt placeholder strokes drawn as text below -->
  <!-- line -->
  <path d="M1288 327l13-12" stroke-width="1.300"/>
  <path d="M1307 318.500l2.500 2.500l-2.500 2.500"/>
  <!-- rect -->
  <rect x="1287.500" y="359.500" width="15" height="14" rx="2"/>
  <path d="M1307 364.500l2.500 2.500l-2.500 2.500"/>
  <!-- pencil -->
  <path d="M1287.500 419.500l1.500-4.500l9.500-9a1.700 1.700 0 0 1 2.500 0l1 1a1.700 1.700 0 0 1 0 2.500l-9.500 9z"/>
  <path d="M1307 410.500l2.500 2.500l-2.500 2.500"/>
  <path d="M1307 456.500l2.500 2.500l-2.500 2.500"/>
  <!-- eraser -->
  <path d="M1287 507l9-9a1.500 1.500 0 0 1 2 0l4.500 4.500a1.500 1.500 0 0 1 0 2l-6.500 6.500h-5z"/>
  <path d="M1291.500 502.500l6.500 6.500"/>
  <path d="M1307 502.500l2.500 2.500l-2.500 2.500"/>
  <!-- undo -->
  <path d="M1290 547a6.200 6.200 0 1 1 4.500 10"/>
  <path d="M1289.500 543v4.500h4.500"/>
  <!-- save -->
  <rect x="1287.500" y="589.500" width="15" height="14" rx="1.500"/>
  <path d="M1295 592v8m-3-3l3 3l3-3"/>
  <!-- cursor -->
  <path d="M1291.500 636.500v12l3-2.500l2.500 5l1.800-.8l-2.500-5h4z"/>
</svg>
<div class="abs" style="left:1286.500px;top:265.500px;height:20px;line-height:20px;font-size:16.500px;color:#3a3a3a;white-space:nowrap;letter-spacing:-1.200px">T<span style="font-size:11.500px">T</span></div>
<!-- ===== annotations ===== -->
<svg class="abs" style="left:0;top:0" width="1366" height="768" viewBox="0 0 1366 768" fill="none" stroke-linecap="round" stroke-linejoin="round">
<path d="M580.0,117.2 C583.0,117.0 592.7,116.8 598.0,116.3 C603.3,115.8 607.3,114.8 612.0,114.2 C616.7,113.6 623.7,113.0 626.0,112.8" stroke="#008080" stroke-width="12.5" stroke-opacity="0.6"/>
<path d="M618.0,112.6 L626.0,113.0" stroke="#008080" stroke-width="14.5" stroke-opacity="0.6"/>
<path d="M988.5,95.5 C988.5,97.6 988.6,104.2 988.8,108.0 C989.0,111.8 988.7,114.2 989.5,118.0 C990.3,121.8 991.1,127.3 993.8,131.0 C996.5,134.7 1001.2,138.6 1005.5,140.3 C1009.8,142.1 1017.1,143.8 1019.6,141.5 C1022.1,139.2 1021.0,131.2 1020.7,126.3 C1020.4,121.4 1018.8,115.5 1018.0,112.0 C1017.2,108.5 1016.3,106.2 1016.0,105.0" stroke="#0000ff" stroke-width="11.7" stroke-opacity="0.6"/>
<path d="M1037.5,106.0 L1037.6,106.2" stroke="#0000ff" stroke-width="10.5" stroke-opacity="0.6"/>
<path d="M296.8,271.1 C295.8,274.6 292.1,284.4 290.9,292.2 C289.7,300.0 288.8,312.5 289.7,318.0 C290.6,323.5 291.7,323.4 296.0,325.0 C300.3,326.6 308.2,326.8 315.5,327.4 C322.8,328.0 335.2,329.7 340.0,328.8 C344.8,327.9 343.6,325.8 344.0,322.0 C344.4,318.2 344.5,314.0 342.5,306.3 C340.5,298.6 335.2,282.5 331.9,275.8 C328.6,269.1 326.8,267.8 322.5,266.0 C318.2,264.2 310.4,264.3 306.1,265.2 C301.8,266.1 298.4,270.1 296.8,271.1" stroke="#800000" stroke-width="10.8" stroke-opacity="0.6"/>
<path d="M191.3,355.5 C189.3,357.4 182.2,361.3 179.5,367.2 C176.8,373.1 175.3,384.2 174.9,390.6 C174.5,397.1 173.7,402.0 177.2,405.9 C180.7,409.8 189.8,412.7 196.0,414.1 C202.2,415.5 210.8,416.5 214.7,414.1 C218.6,411.8 218.6,407.8 219.4,400.0 C220.2,392.2 221.0,374.2 219.4,367.2 C217.8,360.2 214.7,359.8 210.0,357.8 C205.3,355.9 194.4,355.9 191.3,355.5" stroke="#ffff00" stroke-width="11.7" stroke-opacity="0.6"/>
<path d="M680.4,565.6 C679.6,563.1 676.7,556.2 675.7,550.5 C674.8,544.8 675.5,537.9 674.7,531.6 C673.9,525.3 672.3,517.4 670.9,512.7 C669.5,508.0 666.2,506.6 666.2,503.3 C666.2,500.0 666.9,494.5 670.9,492.9 C674.9,491.3 682.8,492.9 690.0,493.5 C697.2,494.1 710.1,494.4 714.3,496.7 C718.5,499.0 718.4,498.1 715.3,507.1 C712.2,516.1 701.0,538.9 695.5,550.5 C690.0,562.1 685.8,569.4 682.3,576.9 C678.8,584.4 677.2,591.1 674.7,595.8 C672.2,600.5 670.7,604.0 667.2,605.2 C663.8,606.5 657.8,605.8 654.0,603.3 C650.2,600.8 646.2,595.6 644.5,590.1 C642.8,584.6 643.5,576.0 643.5,570.0 C643.5,564.0 643.4,560.6 644.2,554.2 C645.0,547.8 646.0,535.8 648.3,531.6 C650.5,527.4 653.8,529.6 657.7,528.8 C661.6,528.0 669.5,527.2 671.9,526.9" stroke="#0000ff" stroke-width="12.2" stroke-opacity="0.6"/>
<path d="M153.7,172.3 C151.9,174.6 145.8,179.3 143.0,186.0 C140.2,192.7 137.4,205.6 137.0,212.7 C136.6,219.8 137.9,224.6 140.5,228.5 C143.1,232.4 148.7,235.8 152.8,236.0 C156.9,236.2 161.3,233.3 165.0,230.0 C168.7,226.7 172.1,221.8 174.8,216.0 C177.5,210.2 180.1,200.2 181.0,195.0 C181.9,189.8 180.8,186.9 180.0,184.6 C179.2,182.3 178.0,181.9 176.5,181.4 C175.0,180.9 171.8,181.6 170.8,181.6" stroke="#cf63cf" stroke-width="1.3"/>
<path d="M211.0,182.0 C210.4,182.7 209.2,184.7 207.3,186.4 C205.4,188.2 200.8,188.4 199.4,192.5 C198.0,196.6 198.2,204.8 198.9,211.0 C199.6,217.2 202.1,226.1 203.8,229.4 C205.5,232.7 207.0,231.6 209.0,231.0 C211.0,230.4 213.9,229.0 216.0,225.9 C218.1,222.8 220.7,218.8 221.4,212.7 C222.2,206.5 221.4,193.7 220.5,189.0 C219.6,184.3 217.8,185.3 216.0,184.6 C214.2,183.9 211.0,184.6 210.0,184.6" stroke="#ea1fe6" stroke-width="1.8"/>
<path d="M353.0,174.0 C354.2,174.6 357.8,177.4 360.0,177.6 C362.2,177.8 366.0,175.0 366.3,175.0 C366.6,175.0 364.4,174.7 362.0,177.5 C359.6,180.3 355.1,185.7 352.0,191.6 C348.9,197.5 345.2,205.8 343.5,212.7 C341.8,219.6 340.7,230.7 341.7,233.0 C342.7,235.3 346.8,231.6 349.6,226.8 C352.4,222.0 356.2,212.2 358.4,204.0 C360.6,195.8 362.1,182.0 362.8,177.6" stroke="#cf63cf" stroke-width="1.3"/>
<path d="M495.7,215.0 C495.8,213.4 495.4,208.8 496.1,205.2 C496.8,201.6 498.4,196.4 500.0,193.5 C501.6,190.6 503.8,188.5 505.9,187.7 C508.0,186.9 511.6,186.3 512.7,188.6 C513.8,190.9 512.9,196.7 512.3,201.3 C511.6,205.9 509.4,213.6 508.8,216.0" stroke="#ea1fe6" stroke-width="1.7"/>
<path d="M647.7,185.7 C646.6,186.0 643.3,186.1 640.9,187.7 C638.5,189.3 634.6,190.6 633.1,195.5 C631.6,200.4 632.1,210.7 632.1,217.0 C632.1,223.3 631.7,231.5 633.0,233.6 C634.3,235.7 637.5,232.7 640.0,229.6 C642.5,226.5 645.8,220.0 647.7,215.0 C649.6,210.0 650.7,204.2 651.6,199.4 C652.5,194.6 652.9,188.2 653.2,186.0" stroke="#ea1fe6" stroke-width="1.8"/>
<path d="M685.2,170.0 C683.8,172.0 679.5,176.9 677.0,181.8 C674.5,186.7 671.8,193.2 670.2,199.4 C668.6,205.6 667.3,213.8 667.3,219.0 C667.3,224.2 667.9,227.8 670.2,230.6 C672.5,233.3 677.9,235.7 681.0,235.5 C684.1,235.3 685.9,234.3 688.8,229.6 C691.7,224.9 695.7,214.8 698.5,207.2 C701.3,199.6 704.2,190.0 705.4,183.8 C706.5,177.6 706.5,173.8 705.4,170.0 C704.2,166.2 701.4,163.2 698.5,161.3 C695.6,159.4 689.6,159.2 687.8,158.8" stroke="#cf63cf" stroke-width="1.4"/>
<path d="M1014.4,225.1 L1010.5,223.1 L1005.0,217.3 L1005.2,195.0 L1005.6,174.3 L1002.7,168.4 L996.8,158.7 L973.4,158.3 L951.9,166.5 L940.2,178.2 L932.3,190.0 L924.5,213.4 L923.6,238.8 L923.6,269.0 L936.3,282.7 L967.5,282.7 L972.4,279.8 L981.2,279.8 L989.0,282.7 L1009.5,282.7 L1017.3,273.9 L1027.0,256.3 L1031.6,238.8 L1030.0,209.0 L1022.2,191.9 L1018.3,187.0" stroke="#1c97c8" stroke-width="2.2"/>
<path d="M267.0,260.5 L247.5,261.7 L242.8,270.0 L237.0,272.3 L237.0,295.7 L241.7,299.2 L240.0,314.5 L255.7,313.8 L262.0,304.0 L261.6,268.8 L267.0,260.5" stroke="#ea1fe6" stroke-width="1.6"/>
<path d="M730.7,276.7 C728.9,276.2 722.4,273.8 720.0,273.8 C717.6,273.8 717.0,273.3 716.5,276.7 C716.0,280.1 716.1,289.1 717.0,294.3 C717.9,299.5 719.5,303.9 722.0,308.0 C724.5,312.1 727.8,317.0 731.7,318.7 C735.6,320.4 742.1,319.9 745.4,318.1 C748.7,316.3 749.8,312.0 751.3,308.0 C752.8,304.0 753.8,298.2 754.2,294.3 C754.6,290.4 755.1,287.6 753.6,284.5 C752.1,281.4 748.4,277.6 745.4,275.7 C742.4,273.8 738.0,273.1 735.6,272.8 C733.2,272.5 731.5,273.6 730.7,273.8" stroke="#ea1fe6" stroke-width="1.7"/>
<path d="M122.8,354.8 C119.8,355.1 110.3,355.6 104.5,356.7 C98.7,357.8 92.6,358.8 88.1,361.3 C83.6,363.8 79.9,367.8 77.6,371.9 C75.3,376.0 74.1,381.5 74.5,386.0 C74.9,390.5 76.9,395.7 79.9,398.9 C83.0,402.1 87.9,404.2 92.8,405.2 C97.7,406.2 105.4,406.7 109.2,404.7 C113.0,402.7 114.2,397.7 115.8,393.0 C117.4,388.3 118.9,380.9 118.6,376.6 C118.3,372.3 115.9,369.4 113.9,367.2 C112.0,365.0 109.1,364.2 106.9,363.7 C104.8,363.2 102.0,364.1 101.0,364.2" stroke="#1414c8" stroke-width="1.4"/>
<path d="M694.6,360.1 C693.6,360.9 691.7,363.4 688.8,364.6 C685.9,365.8 680.9,365.9 677.0,367.5 C673.1,369.1 667.7,371.3 665.3,374.4 C662.9,377.5 662.6,382.2 662.4,386.1 C662.2,390.0 663.2,395.2 664.3,397.8 C665.4,400.4 667.4,401.4 669.2,401.7 C671.0,402.0 673.1,402.4 675.1,399.8 C677.1,397.2 678.9,390.3 681.0,386.1 C683.1,381.9 686.2,378.3 687.8,374.4 C689.4,370.5 690.2,364.6 690.7,362.7" stroke="#ea1fe6" stroke-width="1.6"/>
<path d="M568.6,396.4 C571.7,396.3 583.8,394.6 587.2,396.0 C590.6,397.4 589.4,402.3 589.0,405.0 C588.6,407.7 586.9,411.2 585.0,412.0 C583.1,412.8 579.5,411.2 577.4,410.0 C575.3,408.8 573.3,405.8 572.5,405.0" stroke="#cf63cf" stroke-width="1.5"/>
<path d="M923.0,356.8 C923.2,355.7 921.5,353.6 924.3,350.3 C927.1,347.0 932.0,338.7 940.0,337.2 C948.0,335.7 963.2,339.1 972.5,341.1 C981.8,343.1 990.0,346.4 996.0,349.0 C1002.0,351.6 1006.2,353.8 1008.4,356.8 C1010.6,359.8 1010.6,362.0 1009.0,367.2 C1007.4,372.4 1002.9,380.6 998.5,388.0 C994.1,395.4 988.5,404.6 982.9,411.5 C977.3,418.4 970.8,424.7 964.7,429.7 C958.6,434.7 952.1,439.4 946.5,441.4 C940.9,443.3 934.7,442.9 930.8,441.4 C926.9,439.9 924.1,438.1 923.0,432.3 C921.9,426.5 922.6,415.0 924.3,406.3 C926.0,397.6 930.1,386.3 933.4,380.2 C936.7,374.1 940.2,372.2 943.9,369.8 C947.6,367.4 953.2,366.9 955.6,365.9 C958.0,364.9 957.8,364.1 958.2,363.8" stroke="#e0742a" stroke-width="1.5"/>
<path d="M940.0,382.8 L964.7,428.4" stroke="#e0742a" stroke-width="1.5"/>
<path d="M1008.0,397.5 L1011.5,401.0" stroke="#e0742a" stroke-width="1.5"/>
<path d="M1044.0,398.4 L1050.6,403.6" stroke="#e0742a" stroke-width="1.5"/>
<path d="M1135.0,399.7 L1141.8,401.0" stroke="#e0742a" stroke-width="1.5"/>
<path d="M213.5,484.5 C212.9,483.5 210.7,482.9 210.0,478.6 C209.3,474.3 209.0,463.4 209.6,458.7 C210.2,454.0 211.1,453.1 213.5,450.5 C215.9,447.9 219.9,445.5 224.1,443.4 C228.3,441.2 236.2,438.6 238.6,437.6" stroke="#ea1fe6" stroke-width="1.6"/>
<path d="M236.3,431.7 C236.2,435.6 236.3,447.8 235.8,455.2 C235.3,462.6 235.4,471.4 233.5,476.3 C231.6,481.2 225.7,483.1 224.1,484.5" stroke="#ea1fe6" stroke-width="1.6"/>
<path d="M618.2,628.9 C616.4,628.9 610.0,627.7 607.4,628.9 C604.8,630.1 603.7,631.7 602.6,636.1 C601.5,640.5 601.2,649.7 600.7,655.2 C600.2,660.8 598.2,667.2 599.8,669.4 C601.4,671.6 607.5,669.5 610.2,668.5 C612.9,667.5 614.3,667.2 615.9,663.7 C617.5,660.2 618.4,652.7 619.7,647.6 C621.0,642.5 622.9,635.7 623.5,633.3" stroke="#ea1fe6" stroke-width="1.6"/>
<g stroke="none">
<path d="M533.8,117.6H602V112.0L615.3,123.8L602,135.6V130.0H533.8z" fill="#800000"/>
<path d="M914.1,97.2H1001V91.6L1015.5,103.4L1001,115.2V109.6H914.1z" fill="#0000ff"/>
<path d="M221.7,198.1H328.5V192.5L342,204.3L328.5,216.1V210.5H221.7z" fill="#f0a030"/>
<path d="M468.8,217.3H566.4V211.7L580.1,223.5L566.4,235.3V229.7H468.8z" fill="#f0503f"/>
<path d="M939.8,194.3H1032.4V188.7L1046,200.5L1032.4,212.3V206.7H939.8z" fill="#f07020"/>
<path d="M532.1,309.2H582.3V303.6L596,315.4L582.3,327.2V321.6H532.1z" fill="#000"/>
<path d="M487.2,382.4H589.1V376.8L603.2,388.6L589.1,400.4V394.8H487.2z" fill="#ff00ff"/>
<path d="M1033,372.8H1126V367.2L1138.4,379.0L1126,390.8V385.2H1033z" fill="#f07020"/>
<path d="M521.1,474.3H619.5V468.7L633.4,480.5L619.5,492.3V486.7H521.1z" fill="#808000"/>
<path d="M148.1,485.6H243.3V480.0L256.9,491.8L243.3,503.6V498.0H148.1z" fill="#e066e0"/>
<path d="M875.2,558.2H973.1V552.6L986.5,564.4L973.1,576.2V570.6H875.2z" fill="#e066e0"/>
<path d="M47.8,646.5H134.6V640.9L148,652.7L134.6,664.5V658.9H47.8z" fill="#808000"/>
<path d="M665,647.3H766.3V641.7L779.6,653.5L766.3,665.3V659.7H665z" fill="#108080"/>
</g>
</svg>
<div class="al" style="left:547px;top:118.2px;color:#fff;transform-origin:0 50%;transform:scaleX(0.9595)">Αγγελος</div>
<div class="al" style="left:926.7px;top:97.8px;color:#fff;transform-origin:0 50%;transform:scaleX(0.9201)">Narin Hamou</div>
<div class="al" style="left:234.9px;top:198.7px;color:#fff8d8;transform-origin:0 50%;transform:scaleX(0.9627)">Μαρία - Αναστ...</div>
<div class="al" style="left:481.9px;top:217.9px;color:#fff;transform-origin:0 50%;transform:scaleX(0.9862)">HICHEM AFTIS</div>
<div class="al" style="left:952.7px;top:194.9px;color:#fff;transform-origin:0 50%;transform:scaleX(0.9398)">giannis kovios</div>
<div class="al" style="left:545.2px;top:309.8px;color:#fff;transform-origin:0 50%;transform:scaleX(0.9256)">Tzesi</div>
<div class="al" style="left:499.9px;top:383.0px;color:#000;transform-origin:0 50%;transform:scaleX(1.0051)">ΑΝΔΡΕΟΥ ΦΕ...</div>
<div class="al" style="left:1046px;top:373.4px;color:#fff;transform-origin:0 50%;transform:scaleX(0.9453)">alvaro sollaku</div>
<div class="al" style="left:533.6px;top:474.9px;color:#fff;transform-origin:0 50%;transform:scaleX(0.9183)">manos manesis</div>
<div class="al" style="left:160.8px;top:486.2px;color:#fff;transform-origin:0 50%;transform:scaleX(0.9521)">Μάθιου Λάντα</div>
<div class="al" style="left:887.6px;top:558.8px;color:#fff;transform-origin:0 50%;transform:scaleX(0.9223)">katerina mezini</div>
<div class="al" style="left:60.9px;top:647.1px;color:#fff;transform-origin:0 50%;transform:scaleX(0.8990)">paul&amp;dimitris</div>
<div class="al" style="left:677.8px;top:647.9px;color:#fff;transform-origin:0 50%;transform:scaleX(0.9903)">ΜΥΡΤΩ ΖΟΥΛΙΑ</div>
</div>
</body>
</html>
